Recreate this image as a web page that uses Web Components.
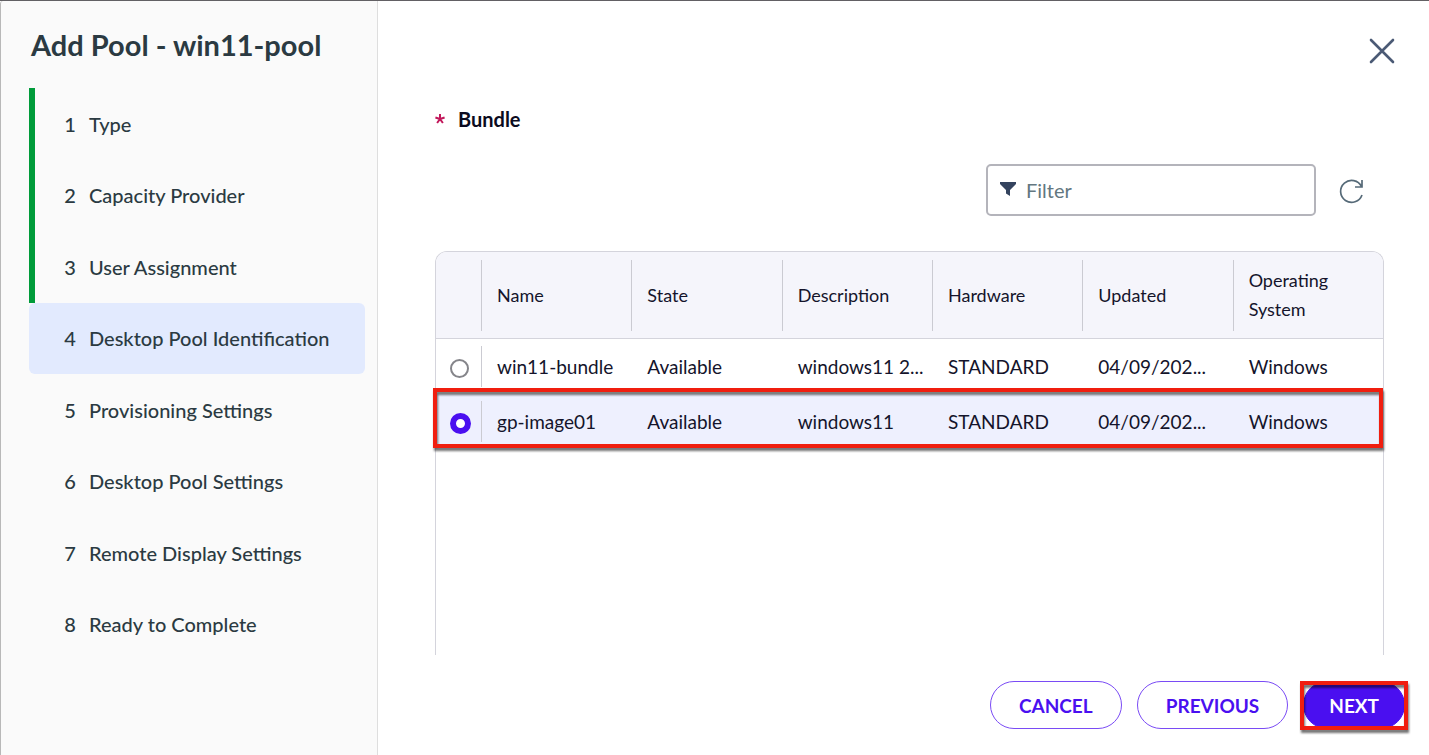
<!DOCTYPE html>
<html lang="en">
<head>
<meta charset="utf-8">
<meta name="viewport" content="width=device-width, initial-scale=1">
<title>Add Pool - win11-pool</title>
<style>
  html, body {
    height: 100%;
    margin: 0;
  }

  body {
    font-family: Lato, "Open Sans", sans-serif;
    font-size: 19px;
    color: #14142b;
    background: #fff;
    --accent: #4a0ff0;
    --ink: #2b3a42;
    --line: #d4d4dc;
    --mark: #f01e0f;
  }
</style>
</head>
<body>

<wizard-dialog>
  <wizard-steps slot="nav" heading="Add Pool - win11-pool" current="4"></wizard-steps>
  <bundle-picker></bundle-picker>
  <pill-button slot="actions">CANCEL</pill-button>
  <pill-button slot="actions">PREVIOUS</pill-button>
  <pill-button slot="actions" primary marked>NEXT</pill-button>
</wizard-dialog>

<script>
/**
 * Outer frame: step list on the left, page content and actions on the right
 */
class WizardDialog extends HTMLElement {
  constructor() {
    super();
    this.attachShadow({ mode: 'open' });
    this.shadowRoot.innerHTML = `
      <style>
        :host {
          display: grid;
          grid-template-columns: 378px 1fr;
          min-height: 100vh;
          box-sizing: border-box;
          border-top: 1px solid #626064;
        }

        .side {
          box-sizing: border-box;
          background: #fafafa;
          border-left: 1px solid #b8b8b8;
          border-right: 1px solid #dedede;
          border-top-left-radius: 3px;
        }

        .main {
          display: flex;
          flex-direction: column;
          min-width: 0;
        }

        .top {
          display: flex;
          justify-content: flex-end;
          padding: 34px 31px 0 0;
        }

        .close {
          width: 32px;
          height: 32px;
          padding: 0;
          border: 0;
          background: none;
          cursor: pointer;
        }

        .close svg {
          display: block;
        }

        .body {
          display: flex;
          flex: 1;
          flex-direction: column;
          padding: 36px 45px 0 57px;
        }

        footer {
          display: flex;
          justify-content: flex-end;
          gap: 15px;
          padding: 26px 24px 26px 0;
        }
      </style>
      <aside class="side"><slot name="nav"></slot></aside>
      <main class="main">
        <div class="top">
          <button class="close" aria-label="Close">
            <svg width="32" height="32" viewBox="0 0 32 32" fill="none" stroke="#4b5a75" stroke-width="2.600" stroke-linecap="round">
              <path d="M5 5 27 27M27 5 5 27"/>
            </svg>
          </button>
        </div>
        <div class="body"><slot></slot></div>
        <footer><slot name="actions"></slot></footer>
      </main>
    `;
  }
}

/**
 * Numbered steps. Those before the current one carry the green bar.
 */
class WizardSteps extends HTMLElement {
  constructor() {
    super();
    this.attachShadow({ mode: 'open' });

    const steps = [
      'Type',
      'Capacity Provider',
      'User Assignment',
      'Desktop Pool Identification',
      'Provisioning Settings',
      'Desktop Pool Settings',
      'Remote Display Settings',
      'Ready to Complete'
    ];
    const current = Number(this.getAttribute('current'));

    const items = steps.map((label, index) => {
      const number = index + 1;
      const state = number < current ? 'done' : number === current ? 'current' : '';
      return `
        <li class="${state}">
          <button ${state === 'current' ? 'aria-current="step"' : ''}>
            <span class="number">${number}</span><span>${label}</span>
          </button>
        </li>`;
    }).join('');

    this.shadowRoot.innerHTML = `
      <style>
        :host {
          display: block;
          padding: 26px 12px 0 28px;
          color: var(--ink);
        }

        h1 {
          margin: 0 0 25px 2px;
          font-size: 29px;
          line-height: 36px;
          font-weight: 700;
        }

        ol {
          display: grid;
          grid-auto-rows: 1fr;
          min-height: 572px;
          margin: 0;
          padding: 0;
          list-style: none;
        }

        li {
          display: flex;
          box-sizing: border-box;
          border-left: 6px solid transparent;
        }

        .done {
          border-color: #009b3a;
        }

        .current {
          border-color: #e2eafe;
          border-radius: 6px;
          background: #e2eafe;
        }

        button {
          display: flex;
          flex: 1;
          align-items: center;
          gap: 13px;
          padding: 0 0 0 29px;
          border: 0;
          background: none;
          color: inherit;
          font: inherit;
          font-family: "Lato Medium", Lato, sans-serif;
          font-size: 20px;
          font-weight: 500;
          line-height: 24px;
          text-align: left;
          cursor: pointer;
        }

        .number {
          width: 12px;
          text-align: center;
        }
      </style>
      <h1>${this.getAttribute('heading')}</h1>
      <ol>${items}</ol>
    `;
  }
}

/**
 * Required "Bundle" field: filter, refresh and the table of bundles
 */
class BundlePicker extends HTMLElement {
  constructor() {
    super();
    this.attachShadow({ mode: 'open' });
    this.shadowRoot.innerHTML = `
      <style>
        :host {
          display: flex;
          flex: 1;
          flex-direction: column;
        }

        h2 {
          display: flex;
          align-items: center;
          gap: 13px;
          margin: 0;
          font-size: 20px;
          line-height: 32px;
          font-weight: 700;
          color: #0b0b20;
        }

        .tools {
          display: flex;
          align-items: center;
          justify-content: flex-end;
          gap: 20px;
          padding: 29px 16px 35px 0;
        }

        label {
          display: flex;
          align-items: center;
          gap: 10px;
          box-sizing: border-box;
          width: 330px;
          height: 52px;
          padding: 0 12px;
          border: 2px solid #b4b4bb;
          border-radius: 5px;
        }

        input {
          flex: 1;
          min-width: 0;
          padding: 0;
          border: 0;
          outline: 0;
          background: none;
          font: inherit;
          font-size: 20px;
        }

        input::placeholder {
          color: #637780;
          opacity: 1;
        }

        .refresh {
          width: 32px;
          height: 32px;
          padding: 0;
          border: 0;
          background: none;
          cursor: pointer;
        }

        svg {
          display: block;
        }

        bundle-table {
          flex: 1;
        }
      </style>
      <h2>
        <svg width="10" height="10" viewBox="0 0 10 10" fill="none" stroke="#c2185b" stroke-width="2" aria-hidden="true">
          <path d="M5 5V0M5 5 .4 3.5M5 5 2.1 9M5 5 7.9 9M5 5 9.6 3.5"/>
        </svg>
        Bundle
      </h2>
      <div class="tools">
        <label>
          <svg width="16" height="16" viewBox="0 0 16 16" fill="#34435e" aria-hidden="true">
            <path d="M0 0H16V2L10 8V14L6 11.500V8L0 2Z"/>
          </svg>
          <input type="text" placeholder="Filter" aria-label="Filter">
        </label>
        <button class="refresh" aria-label="Refresh">
          <svg width="32" height="32" viewBox="0 0 32 32" fill="none" stroke="#566a78" stroke-width="1.700">
            <path d="M26 21A11 11 0 1 1 25.500 12.500M26 6V13H19"/>
          </svg>
        </button>
      </div>
      <bundle-table></bundle-table>
    `;
  }
}

class BundleTable extends HTMLElement {
  constructor() {
    super();
    this.attachShadow({ mode: 'open' });

    const columns = ['Name', 'State', 'Description', 'Hardware', 'Updated', 'Operating System'];
    const bundles = [
      ['win11-bundle', 'Available', 'windows11 2...', 'STANDARD', '04/09/202...', 'Windows'],
      ['gp-image01', 'Available', 'windows11', 'STANDARD', '04/09/202...', 'Windows']
    ];
    const selected = 1;

    const head = columns.map(name => `<th scope="col"><div>${name}</div></th>`).join('');
    const rows = bundles.map((bundle, index) => `
      <tr class="${index === selected ? 'selected' : ''}">
        <td class="pick"><input type="radio" name="bundle" aria-label="${bundle[0]}" ${index === selected ? 'checked' : ''}></td>
        ${bundle.map((text, i) => `<td class="${i === 0 ? 'first' : ''}"><div>${text}</div></td>`).join('')}
      </tr>`).join('');

    this.shadowRoot.innerHTML = `
      <style>
        :host {
          display: block;
          border: 1px solid var(--line);
          border-bottom: 0;
          border-radius: 12px 12px 0 0;
        }

        table {
          width: 100%;
          table-layout: fixed;
          border-collapse: separate;
          border-spacing: 0;
        }

        th, td {
          padding: 0;
          font-weight: 400;
          text-align: left;
        }

        th {
          height: 86px;
          background: #f5f5fb;
          border-bottom: 1px solid var(--line);
          font-size: 18px;
          line-height: 29px;
        }

        th:first-child {
          width: 45px;
          border-top-left-radius: 11px;
        }

        th:last-child {
          border-top-right-radius: 11px;
        }

        th div {
          display: flex;
          align-items: center;
          height: 71px;
          padding: 0 15px;
          border-left: 1px solid #cbcbd2;
        }

        td {
          height: 55px;
          line-height: 41px;
        }

        td div {
          padding-left: 16px;
          white-space: nowrap;
        }

        td.first div {
          padding-left: 15px;
          border-left: 1px solid #cbcbd2;
        }

        input {
          appearance: none;
          display: block;
          box-sizing: border-box;
          width: 19px;
          height: 19px;
          margin: 4px 0 0 14px;
          border: 2px solid #85858a;
          border-radius: 50%;
          background: #fff;
        }

        input:checked {
          width: 21px;
          height: 21px;
          border: 6px solid var(--accent);
        }

        .selected {
          position: relative;
          background: #eef0fe;
        }

        /* Call-out frame over the chosen row */
        .selected .pick::after {
          content: "";
          position: absolute;
          inset: -6px 0 1px -3px;
          border: 4px solid var(--mark);
          filter: drop-shadow(1px 3px 1px rgba(0, 0, 0, 0.55));
          pointer-events: none;
        }
      </style>
      <table>
        <thead><tr><th aria-label="Select"></th>${head}</tr></thead>
        <tbody>${rows}</tbody>
      </table>
    `;
  }
}

class PillButton extends HTMLElement {
  constructor() {
    super();
    this.attachShadow({ mode: 'open' });
    this.shadowRoot.innerHTML = `
      <style>
        :host {
          display: block;
          position: relative;
        }

        button {
          display: block;
          height: 48px;
          padding: 0 28px;
          border: 1px solid #7a4bf5;
          border-radius: 24px;
          background: #fff;
          color: var(--accent);
          font: inherit;
          font-weight: 700;
          cursor: pointer;
        }

        :host([primary]) button {
          padding: 0 25px;
          border-color: var(--accent);
          background: var(--accent);
          color: #fff;
        }

        :host([marked])::after {
          content: "";
          position: absolute;
          inset: 0 -3px -1px;
          border: 4px solid var(--mark);
          filter: drop-shadow(1px 3px 1px rgba(0, 0, 0, 0.55));
          pointer-events: none;
        }
      </style>
      <button><slot></slot></button>
    `;
  }
}

customElements.define('wizard-dialog', WizardDialog);
customElements.define('wizard-steps', WizardSteps);
customElements.define('bundle-table', BundleTable);
customElements.define('bundle-picker', BundlePicker);
customElements.define('pill-button', PillButton);
</script>
</body>
</html>
